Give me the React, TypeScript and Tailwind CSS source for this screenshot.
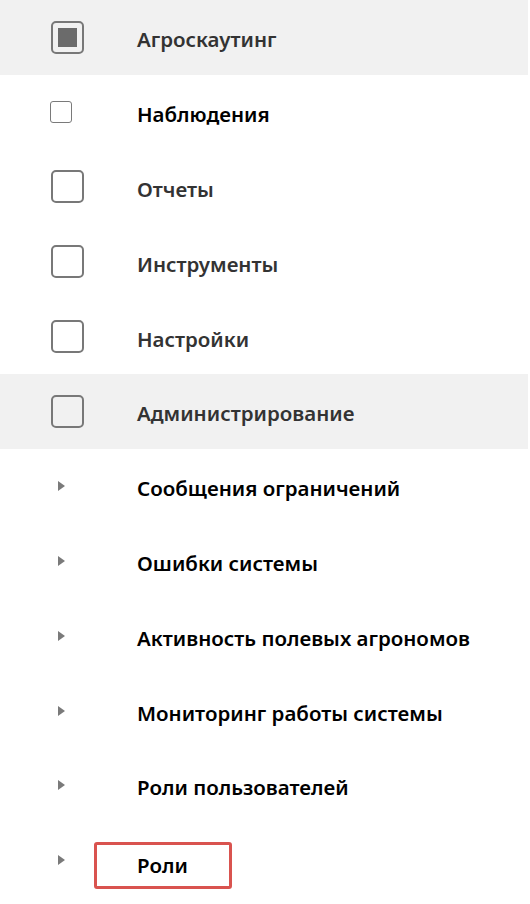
import React from "react";

type Row = {
  label: string;
  kind: "checked" | "small" | "box" | "arrow";
  bg?: boolean;
  dark?: boolean;
  highlight?: boolean;
};

const rows: Row[] = [
  { label: "Агроскаутинг", kind: "checked", bg: true },
  { label: "Наблюдения", kind: "small", dark: true },
  { label: "Отчеты", kind: "box" },
  { label: "Инструменты", kind: "box" },
  { label: "Настройки", kind: "box" },
  { label: "Администрирование", kind: "box", bg: true },
  { label: "Сообщения ограничений", kind: "arrow", dark: true },
  { label: "Ошибки системы", kind: "arrow", dark: true },
  { label: "Активность полевых агрономов", kind: "arrow", dark: true },
  { label: "Мониторинг работы системы", kind: "arrow", dark: true },
  { label: "Роли пользователей", kind: "arrow", dark: true },
  { label: "Роли", kind: "arrow", dark: true, highlight: true },
];

function Marker({ kind }: { kind: Row["kind"] }) {
  if (kind === "checked") {
    return (
      <div className="ml-[51px] flex h-[33px] w-[33px] items-center justify-center rounded-[5px] border-2 border-[#787878]">
        <div className="h-[19px] w-[19px] bg-[#6b6b6b]" />
      </div>
    );
  }
  if (kind === "box") {
    return <div className="ml-[51px] h-[33px] w-[33px] rounded-[5px] border-2 border-[#787878]" />;
  }
  if (kind === "small") {
    return <div className="ml-[50px] h-[22px] w-[22px] rounded-[3px] border-[1.5px] border-[#7a7a7a]" />;
  }
  return (
    <svg className="ml-[58px]" width="8" height="10" viewBox="0 0 8 10">
      <path d="M0 0 L7 5 L0 10 Z" fill="#7a7a7a" />
    </svg>
  );
}

export default function App() {
  return (
    <div
      className="flex w-[530px] flex-col bg-white"
      style={{ fontFamily: '"Noto Sans", "Open Sans", sans-serif' }}
    >
      {rows.map((r, i) => (
        <div
          key={i}
          className={`relative flex h-[74.8px] items-center ${r.bg ? "bg-[#f1f1f1] mr-[2px]" : ""}`}
        >
          <div className="absolute left-0 top-0 flex h-full items-center">
            <Marker kind={r.kind} />
          </div>
          <div className={`ml-[137px] ${r.highlight ? "pt-[10px]" : "pt-[4px]"}`}>
            {r.highlight ? (
              <span className="-ml-[43px] inline-block rounded-[3px] border-[3px] border-[#d9534f] pb-[7px] pt-[6px] pl-[40px] pr-[41px] text-[20.5px] font-semibold leading-[28px] text-black">
                {r.label}
              </span>
            ) : (
              <span
                className={`text-[20.5px] font-semibold leading-[28px] ${r.dark ? "text-black" : "text-[#333333]"}`}
              >
                {r.label}
              </span>
            )}
          </div>
        </div>
      ))}
    </div>
  );
}
